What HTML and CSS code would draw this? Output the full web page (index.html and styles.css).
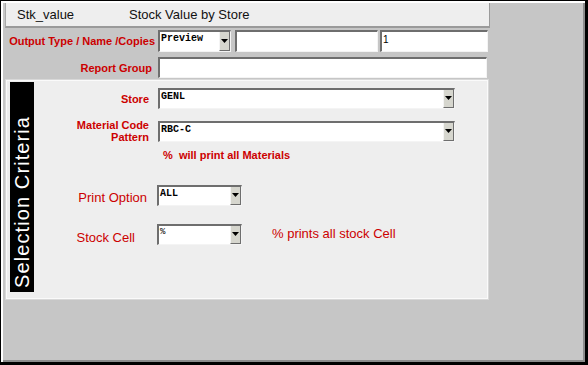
FILE: index.html
```html
<!DOCTYPE html>
<html lang="en">
<head>
    <meta charset="UTF-8">
    <title>Stk_value - Stock Value by Store</title>
    <link rel="stylesheet" href="styles.css">
</head>
<body>

<div class="window">
    <div class="form">
        <div class="titlebar">
            <span class="form-name">Stk_value</span>
            <span class="form-title">Stock Value by Store</span>
        </div>

        <div class="row row-output">
            <label class="label-top">Output Type / Name /Copies</label>
            <div class="combo combo-type">
                <span class="value">Preview</span>
                <span class="drop"><svg width="7" height="5" viewBox="0 0 7 5"><path d="M0 0h7L3.5 4z" fill="#000"/></svg></span>
            </div>
            <div class="field field-name"></div>
            <div class="field field-copies"><span class="plain">1</span></div>
        </div>

        <div class="row row-group">
            <label class="label-top">Report Group</label>
            <div class="field field-group"></div>
        </div>

        <div class="panel">
            <div class="side-bar"><span>Selection Criteria</span></div>
            <div class="criteria">
                <div class="crit-row">
                    <label class="label-bold">Store</label>
                    <div class="combo combo-wide">
                        <span class="value">GENL</span>
                        <span class="drop"><svg width="7" height="5" viewBox="0 0 7 5"><path d="M0 0h7L3.5 4z" fill="#000"/></svg></span>
                    </div>
                </div>
                <div class="crit-row crit-material">
                    <label class="label-bold">Material Code<br>Pattern</label>
                    <div class="combo combo-wide">
                        <span class="value">RBC-C</span>
                        <span class="drop"><svg width="7" height="5" viewBox="0 0 7 5"><path d="M0 0h7L3.5 4z" fill="#000"/></svg></span>
                    </div>
                </div>
                <p class="hint-bold">%&nbsp; will print all Materials</p>

                <div class="crit-row crit-print">
                    <label class="label-plain">Print Option</label>
                    <div class="combo combo-small">
                        <span class="value">ALL</span>
                        <span class="drop"><svg width="7" height="5" viewBox="0 0 7 5"><path d="M0 0h7L3.5 4z" fill="#000"/></svg></span>
                    </div>
                </div>
                <div class="crit-row crit-cell">
                    <label class="label-plain">Stock Cell</label>
                    <div class="combo combo-small">
                        <span class="value value-thin">%</span>
                        <span class="drop"><svg width="7" height="5" viewBox="0 0 7 5"><path d="M0 0h7L3.5 4z" fill="#000"/></svg></span>
                    </div>
                    <span class="hint-plain">% prints all stock Cell</span>
                </div>
            </div>
        </div>
    </div>
</div>

</body>
</html>
```

FILE: styles.css
```css
body {
    margin: 0;
    font-family: 'Liberation Sans', Arial, sans-serif;
}
.window {
    width: 588px;
    height: 365px;
    box-sizing: border-box;
    background: #c6c6c6;
    border-style: solid;
    border-color: #000;
    border-width: 1px 3px 3px 1px;
    box-shadow: inset 2px 2px 0 #fff, inset -2px -2px 0 #8c8c8c;
    padding: 2px 0 0 4px;
}
.form {
    width: 485px;
}
.titlebar {
    height: 23px;
    background: #eeeeee;
    border-left: 1px solid #a8a8a8;
    border-right: 1px solid #9a9a9a;
    border-bottom: 2px solid #9a9a9a;
    display: flex;
    align-items: center;
    font-size: 13px;
    color: #111;
}
.form-name {
    width: 112px;
    padding-left: 11px;
}

/* linhas de cima */
.row {
    display: flex;
    align-items: center;
}
.row-output {
    margin-top: 2px;
    height: 22px;
}
.row-group {
    margin-top: 5px;
    height: 21px;
}
.label-top {
    width: 150px;
    text-align: right;
    font-size: 11px;
    font-weight: bold;
    color: #cc0000;
    white-space: nowrap;
}
.row-group .label-top {
    width: 147px;
    margin-right: 3px;
}
.combo, .field {
    position: relative;
    box-sizing: border-box;
    height: 100%;
    background: #fff;
    border-style: solid;
    border-width: 2px 1px 1px 2px;
    border-color: #6e6e6e #f4f4f4 #f4f4f4 #6e6e6e;
}
.combo-type {
    margin-left: 3px;
    width: 73px;
}
.field-name {
    margin-left: 4px;
    width: 143px;
}
.field-copies {
    margin-left: 2px;
    width: 108px;
}
.field-group {
    margin-left: 3px;
    width: 329px;
}
.value {
    display: block;
    padding: 1px 0 0 1px;
    font-family: 'Liberation Mono', 'Courier New', monospace;
    font-weight: bold;
    font-size: 10px;
    color: #000;
}
.value-thin {
    font-weight: normal;
    font-size: 9px;
}
.plain {
    display: block;
    padding: 2px 0 0 1px;
    font-size: 10px;
    color: #000;
}
.drop {
    position: absolute;
    top: 0;
    right: 0;
    bottom: 0;
    width: 11px;
    background: #d6d6ce;
    border-left: 1px solid #f4f4f4;
    border-right: 1px solid #6e6e6e;
    border-bottom: 1px solid #6e6e6e;
    display: flex;
    justify-content: center;
    align-items: center;
    box-sizing: border-box;
}

/* painel de critérios */
.panel {
    margin: 2px 0 0 1px;
    width: 482px;
    height: 219px;
    box-sizing: border-box;
    background: #eeeeee;
    border: 1px solid #fafafa;
    box-shadow: 0 0 0 1px #d8d8d8;
    padding: 1px 3px 6px 3px;
    display: flex;
}
.side-bar {
    width: 24px;
    background: #000;
    display: flex;
    justify-content: center;
}
.side-bar span {
    writing-mode: vertical-rl;
    transform: rotate(180deg);
    color: #fff;
    font-size: 20px;
    letter-spacing: 1.1px;
    padding-top: 4px;
    white-space: nowrap;
}
.criteria {
    padding-top: 6px;
}
.crit-row {
    display: flex;
    align-items: center;
    height: 21px;
}
.crit-row label {
    text-align: right;
    color: #cc0000;
    white-space: nowrap;
}
.label-bold {
    width: 115px;
    margin-right: 9px;
    font-size: 11px;
    font-weight: bold;
    line-height: 12px;
}
.label-plain {
    font-size: 13px;
}
.combo-wide {
    width: 297px;
}
.combo-small {
    width: 85px;
}
.crit-material {
    margin-top: 12px;
    align-items: flex-end;
}
.crit-material .label-bold {
    margin-bottom: -1px;
}
.hint-bold {
    margin: 7px 0 0 129px;
    font-size: 11px;
    font-weight: bold;
    color: #cc0000;
}
.crit-print {
    margin-top: 24px;
}
.crit-print .label-plain {
    width: 113px;
    margin-right: 10px;
    margin-top: 3px;
}
.crit-cell {
    margin-top: 18px;
}
.crit-cell .label-plain {
    width: 101px;
    margin-right: 22px;
    margin-top: 6px;
}
.hint-plain {
    margin-left: 30px;
    font-size: 13px;
    color: #cc0000;
    margin-bottom: 2px;
}
```
